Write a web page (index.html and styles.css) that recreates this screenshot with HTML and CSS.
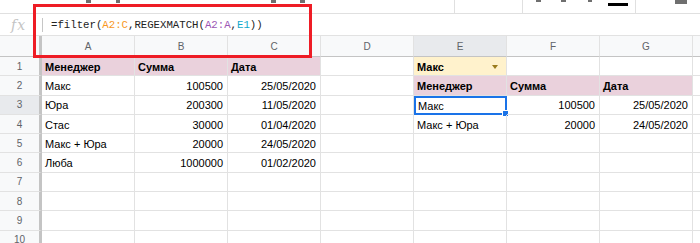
FILE: index.html
```html
<!DOCTYPE html>
<html lang="ru">

<head>
    <meta charset="UTF-8">
    <meta name="viewport" content="width=device-width, initial-scale=1.0">
    <link rel="stylesheet" href="styles.css">
</head>

<body>

    <div class="sheet">
        <svg class="frame" width="279" height="54" viewBox="0 0 279 54">
            <rect x="1.5" y="1.5" width="276" height="51" fill="none" stroke="#ee1c25" stroke-width="3" />
        </svg>

        <div class="toolbar">
            <span class="tb-icon tb-1"></span>
            <span class="tb-icon tb-2"></span>
            <span class="tb-icon tb-3"></span>
            <span class="tb-icon tb-4"></span>
            <span class="tb-sep tb-5"></span>
            <span class="tb-sep tb-6"></span>
            <span class="tb-icon tb-7"></span>
            <span class="tb-icon tb-8"></span>
            <span class="tb-icon tb-9"></span>
            <span class="tb-color"></span>
            <span class="tb-sep tb-10"></span>
            <span class="tb-icon tb-11"></span>
        </div>

        <div class="formula-bar">
            <div class="fx">fx</div>
            <div class="fx-sep"></div>
            <div class="formula">=filter(<span class="ref-a">A2:C</span>,REGEXMATCH(<span class="ref-b">A2:A</span>,<span class="ref-c">E1</span>))</div>
        </div>

        <div class="grid">
            <div class="row col-head">
                <div class="corner"></div>
                <div>A</div><div>B</div><div>C</div><div>D</div>
                <div class="active">E</div><div>F</div><div>G</div><div></div>
            </div>

            <div class="row">
                <div class="num">1</div>
                <div class="cell head">Менеджер</div>
                <div class="cell head">Сумма</div>
                <div class="cell head">Дата</div>
                <div class="cell"></div>
                <div class="cell pick">Макс<span class="drop"></span></div>
                <div class="cell"></div>
                <div class="cell"></div>
                <div class="cell"></div>
            </div>

            <div class="row">
                <div class="num">2</div>
                <div class="cell">Макс</div>
                <div class="cell right">100500</div>
                <div class="cell right">25/05/2020</div>
                <div class="cell"></div>
                <div class="cell head">Менеджер</div>
                <div class="cell head">Сумма</div>
                <div class="cell head">Дата</div>
                <div class="cell"></div>
            </div>

            <div class="row">
                <div class="num active">3</div>
                <div class="cell">Юра</div>
                <div class="cell right">200300</div>
                <div class="cell right">11/05/2020</div>
                <div class="cell"></div>
                <div class="cell selected">Макс<span class="handle"></span></div>
                <div class="cell right">100500</div>
                <div class="cell right">25/05/2020</div>
                <div class="cell"></div>
            </div>

            <div class="row">
                <div class="num">4</div>
                <div class="cell">Стас</div>
                <div class="cell right">30000</div>
                <div class="cell right">01/04/2020</div>
                <div class="cell"></div>
                <div class="cell">Макс + Юра</div>
                <div class="cell right">20000</div>
                <div class="cell right">24/05/2020</div>
                <div class="cell"></div>
            </div>

            <div class="row">
                <div class="num">5</div>
                <div class="cell">Макс + Юра</div>
                <div class="cell right">20000</div>
                <div class="cell right">24/05/2020</div>
                <div class="cell"></div><div class="cell"></div><div class="cell"></div><div class="cell"></div><div class="cell"></div>
            </div>

            <div class="row">
                <div class="num">6</div>
                <div class="cell">Люба</div>
                <div class="cell right">1000000</div>
                <div class="cell right">01/02/2020</div>
                <div class="cell"></div><div class="cell"></div><div class="cell"></div><div class="cell"></div><div class="cell"></div>
            </div>

            <div class="row">
                <div class="num">7</div>
                <div class="cell"></div><div class="cell"></div><div class="cell"></div><div class="cell"></div><div class="cell"></div><div class="cell"></div><div class="cell"></div><div class="cell"></div>
            </div>

            <div class="row">
                <div class="num">8</div>
                <div class="cell"></div><div class="cell"></div><div class="cell"></div><div class="cell"></div><div class="cell"></div><div class="cell"></div><div class="cell"></div><div class="cell"></div>
            </div>

            <div class="row">
                <div class="num">9</div>
                <div class="cell"></div><div class="cell"></div><div class="cell"></div><div class="cell"></div><div class="cell"></div><div class="cell"></div><div class="cell"></div><div class="cell"></div>
            </div>

            <div class="row last">
                <div class="num">10</div>
                <div class="cell"></div><div class="cell"></div><div class="cell"></div><div class="cell"></div><div class="cell"></div><div class="cell"></div><div class="cell"></div><div class="cell"></div>
            </div>
        </div>
    </div>

</body>

</html>
```

FILE: styles.css
```css
body {
    margin: 0;
    padding: 0;
    font-family: "Liberation Sans", Arial, sans-serif;
    background-color: #fff;
    overflow: hidden;
}

.sheet {
    position: relative;
    width: 700px;
    height: 243px;
    overflow: hidden;
}

/* red annotation frame over the formula bar */
.frame {
    position: absolute;
    left: 33px;
    top: 4px;
    z-index: 2;
    display: block;
}

/* toolbar, cut off at the top */
.toolbar {
    position: relative;
    height: 13px;
    border-bottom: 1px solid #e0e0e0;
}

.tb-icon {
    position: absolute;
    top: 0;
    width: 6px;
    height: 3px;
    background-color: #6f6f6f;
}

.tb-sep {
    position: absolute;
    top: 0;
    width: 1px;
    height: 13px;
    background-color: #e0e0e0;
}

.tb-1 { left: 86px; width: 5px; }
.tb-2 { left: 116px; width: 4px; }
.tb-3 { left: 271px; width: 5px; }
.tb-4 { left: 300px; width: 5px; }
.tb-5 { left: 454px; }
.tb-6 { left: 522px; }
.tb-7 { left: 536px; width: 5px; height: 2px; }
.tb-8 { left: 561px; width: 5px; height: 2px; }
.tb-9 { left: 588px; width: 4px; height: 2px; }
.tb-10 { left: 635px; }
.tb-11 { left: 675px; width: 12px; height: 4px; }

.tb-color {
    position: absolute;
    top: 3px;
    left: 608px;
    width: 20px;
    height: 3px;
    background-color: #000;
}

/* formula bar */
.formula-bar {
    display: flex;
    align-items: center;
    height: 21px;
    border-bottom: 1px solid #e2e2e2;
}

.fx {
    width: 42px;
    padding-left: 11px;
    box-sizing: border-box;
    font-family: "DejaVu Serif", "Liberation Serif", serif;
    font-style: italic;
    font-size: 14px;
    color: #c4c4c4;
    letter-spacing: 1px;
}

.fx-sep {
    width: 1px;
    height: 14px;
    background-color: #c6c6c6;
}

.formula {
    padding-left: 8px;
    font-family: "Liberation Mono", monospace;
    font-size: 10.7px;
    color: #222;
    white-space: nowrap;
}

.ref-a {
    color: #f7981d;
}

.ref-b {
    color: #9c56b4;
}

.ref-c {
    color: #11a9cc;
}

/* grid */
.row {
    display: grid;
    grid-template-columns: 42px repeat(8, 93px);
    height: 19.3px;
}

.row > div {
    box-sizing: border-box;
    border-right: 1px solid #e2e2e2;
    border-bottom: 1px solid #e2e2e2;
}

.col-head {
    height: 21px;
}

.col-head > div {
    display: flex;
    align-items: center;
    justify-content: center;
    background-color: #f8f9fa;
    border-bottom: 1px solid #c4c4c4;
    font-size: 10px;
    color: #5f6368;
}

.col-head > .corner {
    border-right: 3px solid #c4c4c4;
}

.col-head > .active,
.num.active {
    background-color: #e8eaed;
}

.num {
    display: flex;
    align-items: center;
    justify-content: center;
    background-color: #f8f9fa;
    font-size: 10px;
    color: #5f6368;
}

.row > .num {
    border-right: 3px solid #c4c4c4;
}

.last .num {
    align-items: flex-start;
    padding-top: 3px;
}

.cell {
    position: relative;
    display: flex;
    align-items: center;
    padding: 1px 3px 0;
    font-size: 11px;
    color: #000;
    white-space: nowrap;
}

.right {
    justify-content: flex-end;
    padding-right: 4px;
}

.head {
    background-color: #ead1dc;
    font-weight: bold;
}

.pick {
    background-color: #fff2cc;
    font-weight: bold;
}

.drop {
    position: absolute;
    right: 8px;
    top: 8px;
    border-left: 3.5px solid transparent;
    border-right: 3.5px solid transparent;
    border-top: 4px solid #9a7b1c;
}

.row > .selected {
    border: 2px solid #1a73e8;
    padding-left: 2px;
}

.handle {
    position: absolute;
    right: -4px;
    bottom: -4px;
    width: 5px;
    height: 5px;
    background-color: #1a73e8;
    border: 1px solid #fff;
}
```
